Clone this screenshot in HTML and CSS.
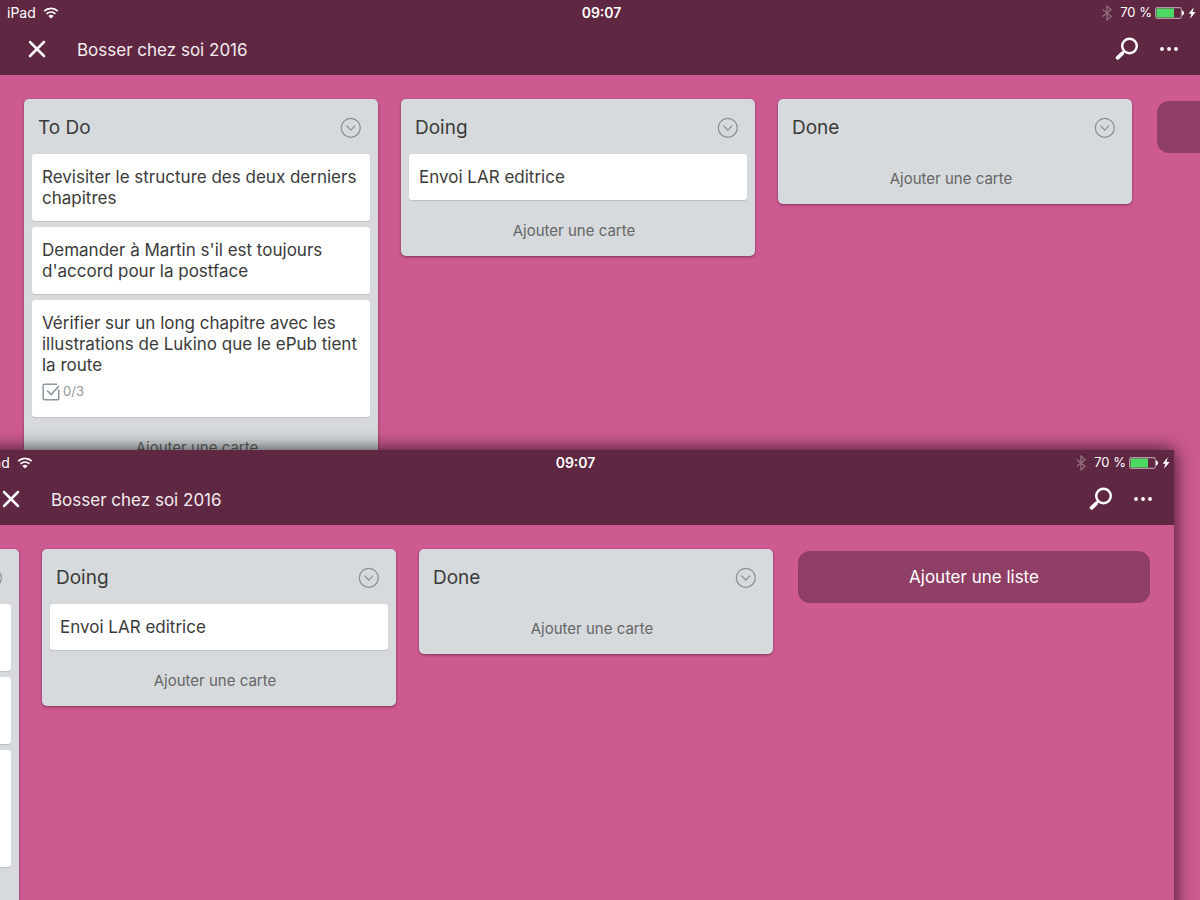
FILE: index.html
```html
<!DOCTYPE html>
<html lang="fr">
<head>
<meta charset="utf-8">
<meta name="viewport" content="width=device-width, initial-scale=1">
<title>Bosser chez soi 2016</title>
<link rel="stylesheet" href="styles.css">
</head>
<body>
<svg class="sprite" aria-hidden="true">
  <symbol id="wifi" viewBox="0 0 16 12">
    <path d="M1.2 4.2a9.8 9.8 0 0 1 13.6 0M3.6 6.8a6.3 6.3 0 0 1 8.8 0" fill="none" stroke="currentColor" stroke-width="1.7"/>
    <path d="M8 11.6 5.4 9a3.7 3.7 0 0 1 5.2 0z" fill="currentColor"/>
  </symbol>
  <symbol id="bluetooth" viewBox="0 0 10 16">
    <path d="M.8 4.5 9 11.3 5 14.9V1.1l4 3.6L.8 11.5" fill="none" stroke="currentColor" stroke-width="1.3"/>
  </symbol>
  <symbol id="battery" viewBox="0 0 30 12">
    <rect x=".6" y=".6" width="25.8" height="10.8" rx="1.8" fill="none" stroke="#b796a4" stroke-width="1.1"/>
    <rect x="1.5" y="1.5" width="17.5" height="9" fill="#4cd964"/>
    <path d="M27 3.5c2.8.4 2.8 4.6 0 5z" fill="#fff"/>
  </symbol>
  <symbol id="bolt" viewBox="0 0 8 12">
    <path d="M5.8.2.6 6.8h2.8L2 11.8l5.7-6.9H4.6z" fill="currentColor"/>
  </symbol>
  <symbol id="close" viewBox="0 0 18 18">
    <path d="m2 2 14 14M16 2 2 16" fill="none" stroke="currentColor" stroke-width="2.5" stroke-linecap="round"/>
  </symbol>
  <symbol id="search" viewBox="0 0 24 24">
    <circle cx="14.5" cy="9" r="7.3" fill="none" stroke="currentColor" stroke-width="2.4"/>
    <path d="m9.3 14.2-2.3 2.3" fill="none" stroke="currentColor" stroke-width="2.4"/>
    <path d="m7 16.6-4.4 4.2" fill="none" stroke="currentColor" stroke-width="3.8" stroke-linecap="round"/>
  </symbol>
  <symbol id="more" viewBox="0 0 20 6">
    <g fill="currentColor"><circle cx="3" cy="3" r="1.9"/><circle cx="10" cy="3" r="1.9"/><circle cx="17" cy="3" r="1.9"/></g>
  </symbol>
  <symbol id="chevron" viewBox="0 0 22 22">
    <g fill="none" stroke="currentColor" stroke-width="1.2"><circle cx="10.8" cy="10.8" r="9.5"/><path d="m6.5 8.6 4.3 4.6 4.3-4.6"/></g>
  </symbol>
  <symbol id="checklist" viewBox="0 0 18 18">
    <path d="M15 1.2H2.2a1 1 0 0 0-1 1v13.6a1 1 0 0 0 1 1h13.6a1 1 0 0 0 1-1V6.5M5.3 7.6l4 4 7.6-8.6" fill="none" stroke="currentColor" stroke-width="1.5"/>
  </symbol>
</svg>

<main class="stage">
  <section class="screen">
    <header class="top">
      <div class="status">
        <div class="status-left"><span>iPad</span><svg class="i-wifi"><use href="#wifi"/></svg></div>
        <time class="clock">09:07</time>
        <div class="status-right"><svg class="i-bluetooth"><use href="#bluetooth"/></svg><span>70 %</span><svg class="i-battery"><use href="#battery"/></svg><svg class="i-bolt"><use href="#bolt"/></svg></div>
      </div>
      <nav class="nav">
        <button class="icon-btn" aria-label="Fermer"><svg class="i-close"><use href="#close"/></svg></button>
        <h1 class="title">Bosser chez soi 2016</h1>
        <button class="icon-btn" aria-label="Rechercher"><svg class="i-search"><use href="#search"/></svg></button>
        <button class="icon-btn" aria-label="Menu"><svg class="i-more"><use href="#more"/></svg></button>
      </nav>
    </header>
    <div class="board">
      <article class="list">
        <div class="list-head"><h2>To Do</h2><button class="icon-btn chevron" aria-label="Options de To Do"><svg class="i-chevron"><use href="#chevron"/></svg></button></div>
        <div class="card">Revisiter le structure des deux derniers chapitres</div>
        <div class="card">Demander à Martin s'il est toujours d'accord pour la postface</div>
        <div class="card">Vérifier sur un long chapitre avec les illustrations de Lukino que le ePub tient la route
          <div class="badge"><svg class="i-checklist"><use href="#checklist"/></svg><span>0/3</span></div>
        </div>
        <button class="add-card">Ajouter une carte</button>
      </article>
      <article class="list">
        <div class="list-head"><h2>Doing</h2><button class="icon-btn chevron" aria-label="Options de Doing"><svg class="i-chevron"><use href="#chevron"/></svg></button></div>
        <div class="card">Envoi LAR editrice</div>
        <button class="add-card">Ajouter une carte</button>
      </article>
      <article class="list">
        <div class="list-head"><h2>Done</h2><button class="icon-btn chevron" aria-label="Options de Done"><svg class="i-chevron"><use href="#chevron"/></svg></button></div>
        <button class="add-card">Ajouter une carte</button>
      </article>
      <button class="add-list" aria-label="Ajouter une liste"></button>
    </div>
  </section>

  <section class="screen front">
    <header class="top">
      <div class="status">
        <div class="status-left"><span>iPad</span><svg class="i-wifi"><use href="#wifi"/></svg></div>
        <time class="clock">09:07</time>
        <div class="status-right"><svg class="i-bluetooth"><use href="#bluetooth"/></svg><span>70 %</span><svg class="i-battery"><use href="#battery"/></svg><svg class="i-bolt"><use href="#bolt"/></svg></div>
      </div>
      <nav class="nav">
        <button class="icon-btn" aria-label="Fermer"><svg class="i-close"><use href="#close"/></svg></button>
        <h1 class="title">Bosser chez soi 2016</h1>
        <button class="icon-btn" aria-label="Rechercher"><svg class="i-search"><use href="#search"/></svg></button>
        <button class="icon-btn" aria-label="Menu"><svg class="i-more"><use href="#more"/></svg></button>
      </nav>
    </header>
    <div class="board scrolled">
      <article class="list">
        <div class="list-head"><h2>To Do</h2><button class="icon-btn chevron" aria-label="Options de To Do"><svg class="i-chevron"><use href="#chevron"/></svg></button></div>
        <div class="card">Revisiter le structure des deux derniers chapitres</div>
        <div class="card">Demander à Martin s'il est toujours d'accord pour la postface</div>
        <div class="card">Vérifier sur un long chapitre avec les illustrations de Lukino que le ePub tient la route
          <div class="badge"><svg class="i-checklist"><use href="#checklist"/></svg><span>0/3</span></div>
        </div>
        <button class="add-card">Ajouter une carte</button>
      </article>
      <article class="list">
        <div class="list-head"><h2>Doing</h2><button class="icon-btn chevron" aria-label="Options de Doing"><svg class="i-chevron"><use href="#chevron"/></svg></button></div>
        <div class="card">Envoi LAR editrice</div>
        <button class="add-card">Ajouter une carte</button>
      </article>
      <article class="list">
        <div class="list-head"><h2>Done</h2><button class="icon-btn chevron" aria-label="Options de Done"><svg class="i-chevron"><use href="#chevron"/></svg></button></div>
        <button class="add-card">Ajouter une carte</button>
      </article>
      <button class="add-list">Ajouter une liste</button>
    </div>
  </section>
</main>
</body>
</html>
```
FILE: styles.css
```css
* { box-sizing: border-box; }

body {
  margin: 0;
  background: #cd5a91;
  color: #3a3a3a;
  font-family: Inter, "Liberation Sans", sans-serif;
  font-size: 17px;
  line-height: 21px;
}

button {
  margin: 0;
  padding: 0;
  border: 0;
  background: none;
  color: inherit;
  font: inherit;
  cursor: pointer;
}

h1, h2 { margin: 0; font-weight: 400; }
svg { display: block; flex: none; }
.sprite { display: none; }

.stage {
  display: grid;
  grid-template-columns: minmax(0, 1fr);
  grid-template-rows: minmax(0, 1fr) minmax(0, 1fr);
  height: 100vh;
  overflow: hidden;
}

.screen {
  display: flex;
  flex-direction: column;
  overflow: hidden;
  background: #cd5a91;
}

/* The second capture slides left, runs past the bottom edge and casts a shadow on the first. */
.front {
  z-index: 1;
  margin: 0 26px -40px -26px;
  box-shadow: 0 0 18px rgba(0, 0, 0, 0.8);
}

.top {
  flex: none;
  background: #5f2741;
  color: #fff;
}

.status {
  display: grid;
  grid-template-columns: 1fr auto 1fr;
  align-items: center;
  height: 25px;
  padding: 0 4px 0 7px;
  font-size: 13px;
}

.status-left, .status-right { display: flex; align-items: center; }
.status-left { gap: 7px; font-size: 14px; }
.status-right { justify-content: flex-end; gap: 3px; }
.clock { font-size: 14px; font-weight: 600; }

.i-wifi { width: 16px; height: 12px; }
.i-bluetooth { width: 10px; height: 16px; margin-right: 5px; color: #94707f; }
.i-battery { width: 30px; height: 12px; }
.i-bolt { width: 8px; height: 12px; }

.nav {
  display: flex;
  align-items: center;
  height: 50px;
  padding: 0 21px 3px 28px;
}

.icon-btn { display: grid; place-items: center; flex: none; }
.title { flex: 1; margin-left: 31px; padding-top: 3px; font-size: 17px; color: #f3ecef; }
.i-close { width: 18px; height: 18px; }
.i-search { width: 24px; height: 24px; margin-right: 20px; }
.i-more { width: 20px; height: 6px; }

.board {
  display: flex;
  align-items: flex-start;
  gap: 23px;
  flex: 1;
  padding: 24px;
}

.scrolled { margin-left: -333px; }

.list {
  flex: none;
  width: 354px;
  padding: 0 8px;
  border-radius: 5px;
  background: #d6dadc;
  box-shadow: 0 1px 3px rgba(0, 0, 0, 0.4);
}

.list-head {
  display: flex;
  align-items: center;
  justify-content: space-between;
  height: 55px;
  padding: 2px 8px 0 6px;
}

.list-head h2 { font-size: 19px; line-height: 24px; }
.chevron { color: #8c8f91; }
.i-chevron { width: 22px; height: 22px; }

.card {
  margin-bottom: 6px;
  padding: 13px 10px 12px;
  border-radius: 3px;
  background: #fff;
  box-shadow: 0 1px 1px rgba(0, 0, 0, 0.12);
}

.badge {
  display: flex;
  align-items: center;
  gap: 3px;
  padding: 5px 0 3px;
  color: #95999c;
  font-size: 13px;
}

.i-checklist { width: 18px; height: 18px; color: #8c979c; }

.add-card {
  display: block;
  width: 100%;
  height: 50px;
  padding: 0 8px 2px 0;
  color: #666;
  font-size: 15px;
}

.add-list {
  flex: none;
  width: 352px;
  height: 52px;
  margin: 2px 0 0 2px;
  border-radius: 12px;
  background: #8f3f65;
  color: #fff;
}
```
